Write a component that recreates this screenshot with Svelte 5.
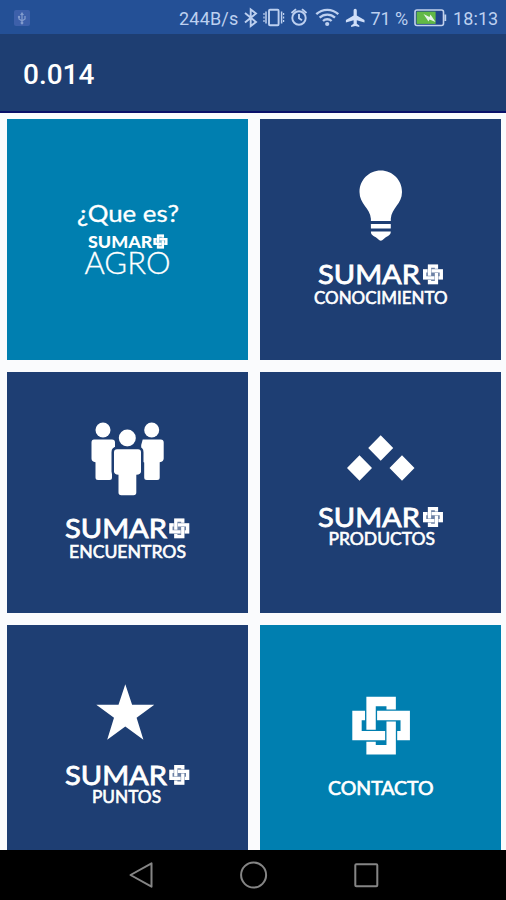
<script lang="ts">
	interface Tile {
		name: string;
		x: number;
		width: number;
		baseline: number;
		brand?: { baseline: number; crossX: number };
		light?: boolean;
	}

	const speed = '244B/s';
	const battery = '71 %';
	const time = '18:13';
	const title = '0.014';

	// four interlocked hooks, drawn on a 172 x 172 grid
	const cross = 'M38 56H14V116H98M56 98V14H116V38M134 116H158V56H74M116 74V158H56V134';
	const crossBack = 'M42 0H130V42H172V130H130V172H42V130H0V42H42z';

	const tiles: Tile[] = [
		{ name: 'AGRO', x: 77.5, width: 86, baseline: 155.3, light: true },
		{ name: 'CONOCIMIENTO', x: 54, width: 133.5, baseline: 184.5, brand: { baseline: 165, crossX: 163 } },
		{ name: 'ENCUENTROS', x: 62, width: 117, baseline: 185.7, brand: { baseline: 166, crossX: 162.3 } },
		{ name: 'PRODUCTOS', x: 68.5, width: 106.5, baseline: 173, brand: { baseline: 154.7, crossX: 163 } },
		{ name: 'PUNTOS', x: 85, width: 69, baseline: 178.3, brand: { baseline: 159.5, crossX: 162.3 } },
		{ name: 'CONTACTO', x: 68, width: 105.5, baseline: 169.5, light: true }
	];
</script>

<div class="screen">
	<div class="status">
		<svg class="usb" width="16" height="16" viewBox="0 0 16 16">
			<rect width="16" height="16" rx="2" fill="#3d60aa" />
			<path d="M8 13V4M5 7v2l3 2 3-2V6" fill="none" stroke="#829bcd" stroke-width="1.3" />
			<path d="M6 5l2-3 2 3z" fill="#829bcd" />
			<circle cx="5" cy="7" r="1.2" fill="#829bcd" />
			<circle cx="8" cy="13" r="1.4" fill="#829bcd" />
		</svg>
		<span class="speed">{speed}</span>
		<svg class="icons" width="128" height="24" viewBox="243 6 128 24">
			<g fill="none" stroke="#bdd0f0" stroke-width="1.9">
				<path d="M246 13l11 9-5.300 4V9.500l5.300 4-11 9" />
				<rect x="270" y="9.700" width="9.600" height="15.600" rx="1" />
				<path d="M267 11.500v12M282.600 11.500v12" stroke-width="1.500" />
				<path d="M265 13v9M284.600 13v9" stroke-width="1.200" stroke-dasharray="2 1.500" />
				<circle cx="300" cy="18" r="6.700" />
				<path d="M300 14v4.300l3 1.900M292.500 13l4.500-3.900M307.500 13l-4.500-3.900" />
				<path d="M317.300 14.200a16 16 0 0 1 22 0M320.600 17.700a11.300 11.300 0 0 1 15.400 0M324 21a6.200 6.200 0 0 1 8.600 0" stroke-width="2.300" />
			</g>
			<circle cx="328.200" cy="24" r="2.100" fill="#bdd0f0" />
			<path d="M356.200 8.700c1 0 1.600.9 1.600 2v4.900l7.700 4.400v2.400l-7.700-2.200v3.600l2.500 1.800v1.500l-4.100-1-4.100 1v-1.500l2.500-1.800v-3.600l-7.700 2.200v-2.400l7.700-4.400v-4.900c0-1.100.6-2 1.600-2z" fill="#cfdef8" />
		</svg>
		<span class="percent">{battery}</span>
		<svg class="battery" width="33" height="18" viewBox="0 0 33 18">
			<rect x="1" y="1" width="28.500" height="15.500" rx="2" fill="#1f448b" stroke="#c3d2ed" stroke-width="1.600" />
			<rect x="2.600" y="2.600" width="19" height="12.300" fill="#62b946" />
			<path d="M31.300 5.500v6.500" stroke="#c3d2ed" stroke-width="1.800" />
			<path d="M9.500 5l6 3 1-2.500 5 7.500-6-2.500-1 2z" fill="#e5f4e8" />
		</svg>
		<span class="time">{time}</span>
	</div>

	<header><h1>{title}</h1></header>

	<main>
		{#each tiles as tile}
			<div class="tile" class:light={tile.light}>
				<svg width="241" height="241" viewBox="0 0 241 241" fill="#fff">
					{#if tile.name === 'AGRO'}
						<text class="question" x="70" y="102.700" textLength="102" lengthAdjust="spacingAndGlyphs">¿Que es?</text>
						<text class="small-brand" x="81" y="128.500" textLength="64.500" lengthAdjust="spacingAndGlyphs">SUMAR</text>
						<g transform="translate(146.500 115.500) scale(.081)">
							<path d={crossBack} opacity=".45" />
							<path class="cross" d={cross} />
						</g>
					{:else if tile.name === 'CONOCIMIENTO'}
						<path d="M120.700 51.600c12 0 21.300 9.600 21.300 21.300 0 12-10.500 16-11.200 26.800V102H110.900v-2.300C110.200 89 99.500 85 99.500 72.900c0-11.700 9.200-21.300 21.200-21.300z" />
						<rect x="110.900" y="105" width="19.900" height="4.500" rx=".5" />
						<path d="M110.900 112.600h19.900c0 3.500-2.500 4.200-5 5.700-1.700 1-3 3.400-5 3.400s-3.200-2.400-5-3.400c-2.500-1.500-4.900-2.200-4.900-5.700z" />
					{:else if tile.name === 'ENCUENTROS'}
						<circle cx="96" cy="58" r="7.500" />
						<path d="M87 67.500h18q3 0 3 3v16q0 3-3 4v15q0 2.500-2.500 2.500H91q-2.500 0-2.500-2.500V90.200q-4-.5-4-3.700V70.500q0-3 2.500-3z" />
						<circle cx="144.700" cy="58" r="7.500" />
						<path d="M135.700 67.500h18q3 0 3 3v16q0 3-4 3.700v15.300q0 2.500-2.500 2.500h-10.500q-2.500 0-2.500-2.500V90.500q-3-1-3-4V73z" />
						<g stroke="#1e3e73" stroke-width="5" paint-order="stroke">
							<circle cx="120.300" cy="66" r="8.500" />
							<path d="M110 77.200h21q3 0 3 3V99.500q0 3-4.700 3.200v17.800q0 2.800-2.800 2.800h-12.200q-2.800 0-2.800-2.800v-17.800q-4.500-.2-4.500-3.200V80.200q0-3 3-3z" />
						</g>
					{:else if tile.name === 'PRODUCTOS'}
						<path d="M120.700 63.300L133.200 76l-12.500 12.700L108.200 76zM99.500 83.300L112 96l-12.500 12.700L87 96zM142 83.300L154.500 96 142 108.700 129.500 96z" />
					{:else if tile.name === 'PUNTOS'}
						<path d="M118.300 59.200l6.800 20.500H147.300l-17.700 13 6.800 22-18.100-13.300-18.100 13.300 6.800-22-17.700-13h22.200z" />
					{:else}
						<path class="cross" transform="translate(92.300 71.800) scale(.335)" d={cross} />
					{/if}

					{#if tile.brand}
						<text class="brand" x="58" y={tile.brand.baseline} textLength="102" lengthAdjust="spacingAndGlyphs">SUMAR</text>
						<g transform="translate({tile.brand.crossX} {tile.brand.baseline - 19.6}) scale(.116)">
							<path d={crossBack} opacity=".35" />
							<path class="cross" d={cross} />
						</g>
					{/if}
					<text
						class="name"
						class:agro={tile.name === 'AGRO'}
						class:contact={tile.name === 'CONTACTO'}
						x={tile.x}
						y={tile.baseline}
						textLength={tile.width}
						lengthAdjust="spacingAndGlyphs">{tile.name}</text
					>
				</svg>
			</div>
		{/each}
	</main>

	<nav>
		<svg width="506" height="50" viewBox="0 0 506 50" fill="none" stroke="#858585" stroke-width="2">
			<path d="M151.500 13.300v23.400L130.500 25z" stroke-linejoin="round" />
			<circle cx="253.600" cy="25" r="12.500" />
			<rect x="355.300" y="14.300" width="22" height="22" rx="1" />
		</svg>
	</nav>
</div>

<style>
	:global(body) {
		margin: 0;
		background: #fafbfd;
	}

	.screen {
		display: flex;
		flex-direction: column;
		width: 506px;
		height: 900px;
		overflow: hidden;
		background: #fafbfd;
		font-family: Roboto, sans-serif;
	}

	.status {
		display: flex;
		align-items: center;
		flex: none;
		box-sizing: border-box;
		height: 34px;
		padding: 2px 8px 0 14px;
		background: #245096;
		color: #bdd0f0;
		font-size: 18px;
		white-space: nowrap;
	}

	.status svg {
		flex: none;
	}

	.usb {
		margin-top: -1px;
	}

	.speed {
		width: 64px;
		margin-left: 149px;
		letter-spacing: 0.2px;
	}

	.percent {
		width: 44px;
	}

	.battery {
		margin-right: 6px;
	}

	.time {
		width: 45px;
		letter-spacing: 0.1px;
	}

	header {
		display: flex;
		align-items: center;
		flex: none;
		box-sizing: border-box;
		height: 79px;
		padding: 4px 23px 0;
		border-bottom: 2px solid #09106a;
		background: #1e3e72;
	}

	h1 {
		margin: 0;
		color: #fff;
		font-size: 28px;
		font-weight: 500;
	}

	main {
		display: grid;
		grid-template-columns: 241px 241px;
		grid-auto-rows: 241px;
		align-content: start;
		gap: 12px;
		flex: 1;
		min-height: 0;
		padding: 6px 5px 0 7px;
		overflow: hidden;
	}

	.tile {
		background: #1e3e73;
	}

	.tile.light {
		background: #007fb0;
	}

	.tile svg {
		display: block;
		font-family: Lato, sans-serif;
	}

	.cross {
		fill: none;
		stroke: #fff;
		stroke-width: 28;
	}

	.question {
		font-size: 23px;
		font-weight: 400;
		stroke: #fff;
		stroke-width: 0.3px;
	}

	.small-brand {
		font-size: 17.5px;
		font-weight: 900;
	}

	.brand {
		font-size: 26.5px;
		font-weight: 400;
		stroke: #fff;
		stroke-width: 0.8px;
	}

	.name {
		font-size: 17px;
		font-weight: 400;
		stroke: #fff;
		stroke-width: 0.6px;
	}

	.name.agro {
		font-size: 31px;
		font-weight: 300;
		stroke-width: 0.3px;
	}

	.name.contact {
		font-size: 19px;
		stroke-width: 0.7px;
	}

	nav {
		flex: none;
		height: 50px;
		background: #000;
	}
</style>
